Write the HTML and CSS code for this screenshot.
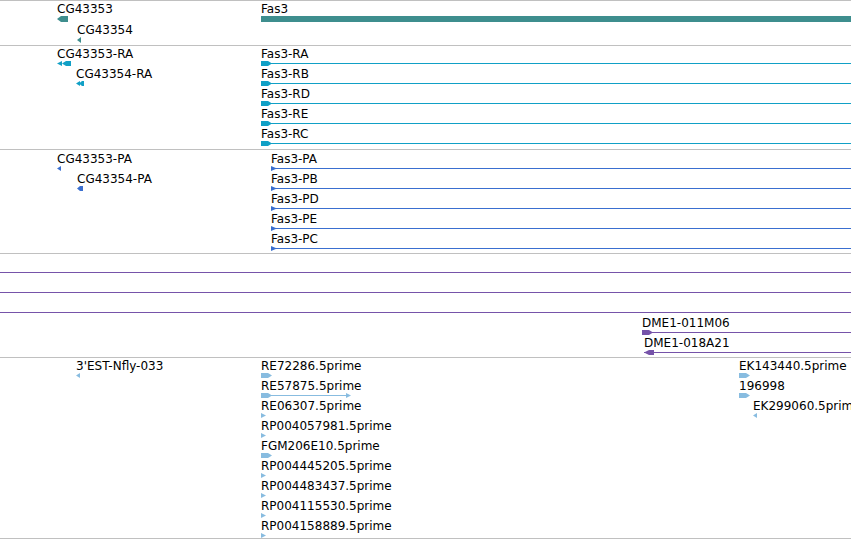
FILE: index.html
```html
<!DOCTYPE html>
<html lang="en">
<head>
  <meta charset="UTF-8">
  <title>Genome view</title>
  <link rel="stylesheet" href="styles.css">
</head>
<body>

  <div class="tracks">

    <!-- genes -->
    <div class="track gene t44">
      <div class="feat" style="left:57px;top:0;width:12px">
        <div class="lbl">CG43353</div>
        <svg class="glyph" width="12" height="6"><polygon points="0,3 4,0 11,0 11,6 4,6"/></svg>
      </div>
      <div class="feat" style="left:77px;top:21px;width:5px">
        <div class="lbl">CG43354</div>
        <svg class="glyph" width="5" height="6"><polygon points="0,3 4,0 4,6"/></svg>
      </div>
      <div class="feat" style="left:261px;top:0;width:590px">
        <div class="lbl">Fas3</div>
        <svg class="glyph" width="590" height="6"><rect x="0" y="0" width="590" height="6"/></svg>
      </div>
    </div>

    <!-- transcripts -->
    <div class="track mrna">
      <div class="feat" style="left:57px;top:0;width:15px">
        <div class="lbl">CG43353-RA</div>
        <svg class="glyph" width="15" height="5"><polygon points="0,2.5 5,0 5,5"/><polygon points="5,2.5 9,0 14,0 14,5 9,5"/></svg>
      </div>
      <div class="feat" style="left:76px;top:20px;width:9px">
        <div class="lbl">CG43354-RA</div>
        <svg class="glyph" width="9" height="5"><polygon points="0,2.5 4,0 4,5"/><polygon points="3,2.5 6,0 8,0 8,5 6,5"/></svg>
      </div>
      <div class="feat" style="left:261px;top:0;width:590px">
        <div class="lbl">Fas3-RA</div>
        <svg class="glyph" width="590" height="5"><rect x="0" y="2" width="590" height="1"/><polygon points="0,0 7,0 11,2.5 7,5 0,5"/></svg>
      </div>
      <div class="feat" style="left:261px;top:20px;width:590px">
        <div class="lbl">Fas3-RB</div>
        <svg class="glyph" width="590" height="5"><rect x="0" y="2" width="590" height="1"/><polygon points="0,0 7,0 11,2.5 7,5 0,5"/></svg>
      </div>
      <div class="feat" style="left:261px;top:40px;width:590px">
        <div class="lbl">Fas3-RD</div>
        <svg class="glyph" width="590" height="5"><rect x="0" y="2" width="590" height="1"/><polygon points="0,0 7,0 11,2.5 7,5 0,5"/></svg>
      </div>
      <div class="feat" style="left:261px;top:60px;width:590px">
        <div class="lbl">Fas3-RE</div>
        <svg class="glyph" width="590" height="5"><rect x="0" y="2" width="590" height="1"/><polygon points="0,0 7,0 11,2.5 7,5 0,5"/></svg>
      </div>
      <div class="feat" style="left:261px;top:80px;width:590px">
        <div class="lbl">Fas3-RC</div>
        <svg class="glyph" width="590" height="5"><rect x="0" y="2" width="590" height="1"/><polygon points="0,0 7,0 11,2.5 7,5 0,5"/></svg>
      </div>
    </div>

    <!-- coding sequences -->
    <div class="track cds">
      <div class="feat" style="left:57px;top:1px;width:5px">
        <div class="lbl">CG43353-PA</div>
        <svg class="glyph" width="5" height="5"><polygon points="0,2.5 4,0 4,5"/></svg>
      </div>
      <div class="feat" style="left:77px;top:21px;width:7px">
        <div class="lbl">CG43354-PA</div>
        <svg class="glyph" width="7" height="5"><polygon points="0,2.5 3,0 6,0 6,5 3,5"/></svg>
      </div>
      <div class="feat" style="left:271px;top:1px;width:580px">
        <div class="lbl">Fas3-PA</div>
        <svg class="glyph" width="580" height="5"><rect x="0" y="2" width="580" height="1"/><polygon points="0,0 6,2.5 0,5"/></svg>
      </div>
      <div class="feat" style="left:271px;top:21px;width:580px">
        <div class="lbl">Fas3-PB</div>
        <svg class="glyph" width="580" height="5"><rect x="0" y="2" width="580" height="1"/><polygon points="0,0 6,2.5 0,5"/></svg>
      </div>
      <div class="feat" style="left:271px;top:41px;width:580px">
        <div class="lbl">Fas3-PD</div>
        <svg class="glyph" width="580" height="5"><rect x="0" y="2" width="580" height="1"/><polygon points="0,0 6,2.5 0,5"/></svg>
      </div>
      <div class="feat" style="left:271px;top:61px;width:580px">
        <div class="lbl">Fas3-PE</div>
        <svg class="glyph" width="580" height="5"><rect x="0" y="2" width="580" height="1"/><polygon points="0,0 6,2.5 0,5"/></svg>
      </div>
      <div class="feat" style="left:271px;top:81px;width:580px">
        <div class="lbl">Fas3-PC</div>
        <svg class="glyph" width="580" height="5"><rect x="0" y="2" width="580" height="1"/><polygon points="0,0 6,2.5 0,5"/></svg>
      </div>
    </div>

    <!-- clones -->
    <div class="track clone">
      <div class="feat bare" style="left:0;top:1px;width:851px">
        <svg class="glyph" width="851" height="5"><rect x="0" y="2" width="851" height="1"/></svg>
      </div>
      <div class="feat bare" style="left:0;top:21px;width:851px">
        <svg class="glyph" width="851" height="5"><rect x="0" y="2" width="851" height="1"/></svg>
      </div>
      <div class="feat bare" style="left:0;top:41px;width:851px">
        <svg class="glyph" width="851" height="5"><rect x="0" y="2" width="851" height="1"/></svg>
      </div>
      <div class="feat" style="left:642px;top:61px;width:209px">
        <div class="lbl">DME1-011M06</div>
        <svg class="glyph" width="209" height="5"><rect x="0" y="2" width="209" height="1"/><polygon points="0,0 7,0 11,2.5 7,5 0,5"/></svg>
      </div>
      <div class="feat" style="left:644px;top:81px;width:207px">
        <div class="lbl">DME1-018A21</div>
        <svg class="glyph" width="207" height="5"><rect x="0" y="2" width="207" height="1"/><polygon points="0,2.5 5,0 10,0 10,5 5,5"/></svg>
      </div>
    </div>

    <!-- ESTs -->
    <div class="track est t180">
      <div class="feat" style="left:76px;top:0;width:4px">
        <div class="lbl">3'EST-Nfly-033</div>
        <svg class="glyph" width="4" height="5"><polygon points="0,2.5 4,0 4,5"/></svg>
      </div>
      <div class="feat" style="left:261px;top:0;width:12px">
        <div class="lbl">RE72286.5prime</div>
        <svg class="glyph" width="12" height="5"><polygon points="0,0 7,0 11,2.5 7,5 0,5"/></svg>
      </div>
      <div class="feat" style="left:261px;top:20px;width:91px">
        <div class="lbl">RE57875.5prime</div>
        <svg class="glyph" width="91" height="5"><rect x="0" y="2" width="88" height="1"/><polygon points="0,0 7,0 11,2.5 7,5 0,5"/><polygon points="85,0 90,2.5 85,5"/></svg>
      </div>
      <div class="feat" style="left:261px;top:40px;width:5px">
        <div class="lbl">RE06307.5prime</div>
        <svg class="glyph" width="5" height="5"><polygon points="0,0 5,2.5 0,5"/></svg>
      </div>
      <div class="feat" style="left:261px;top:60px;width:5px">
        <div class="lbl">RP004057981.5prime</div>
        <svg class="glyph" width="5" height="5"><polygon points="0,0 5,2.5 0,5"/></svg>
      </div>
      <div class="feat" style="left:261px;top:80px;width:12px">
        <div class="lbl">FGM206E10.5prime</div>
        <svg class="glyph" width="12" height="5"><polygon points="0,0 7,0 11,2.5 7,5 0,5"/></svg>
      </div>
      <div class="feat" style="left:261px;top:100px;width:5px">
        <div class="lbl">RP004445205.5prime</div>
        <svg class="glyph" width="5" height="5"><polygon points="0,0 5,2.5 0,5"/></svg>
      </div>
      <div class="feat" style="left:261px;top:120px;width:5px">
        <div class="lbl">RP004483437.5prime</div>
        <svg class="glyph" width="5" height="5"><polygon points="0,0 5,2.5 0,5"/></svg>
      </div>
      <div class="feat" style="left:261px;top:140px;width:5px">
        <div class="lbl">RP004115530.5prime</div>
        <svg class="glyph" width="5" height="5"><polygon points="0,0 5,2.5 0,5"/></svg>
      </div>
      <div class="feat" style="left:261px;top:160px;width:5px">
        <div class="lbl">RP004158889.5prime</div>
        <svg class="glyph" width="5" height="5"><polygon points="0,0 5,2.5 0,5"/></svg>
      </div>
      <div class="feat" style="left:739px;top:0;width:12px">
        <div class="lbl">EK143440.5prime</div>
        <svg class="glyph" width="12" height="5"><polygon points="0,0 7,0 11,2.5 7,5 0,5"/></svg>
      </div>
      <div class="feat" style="left:739px;top:20px;width:12px">
        <div class="lbl">196998</div>
        <svg class="glyph" width="12" height="5"><polygon points="0,0 7,0 11,2.5 7,5 0,5"/></svg>
      </div>
      <div class="feat" style="left:753px;top:40px;width:4px">
        <div class="lbl">EK299060.5prime</div>
        <svg class="glyph" width="4" height="5"><polygon points="0,2.5 4,0 4,5"/></svg>
      </div>
    </div>

  </div>

</body>
</html>
```

FILE: styles.css
```css
body {
  margin: 0;
  padding: 0;
  background: #fff;
  font-family: "DejaVu Sans", sans-serif;
  font-size: 12px;
  color: #000;
}
.tracks {
  width: 851px;
  border-top: 1px solid #c0c0c0;
  overflow: hidden;
}
.track {
  position: relative;
  height: 103px;
  border-bottom: 1px solid #c0c0c0;
  overflow: hidden;
}
.track.t44 {
  height: 44px;
}
.track.t180 {
  height: 180px;
}
.feat {
  position: absolute;
  padding-top: 2px;
}
.feat.bare {
  padding-top: 15px;
}
.lbl {
  height: 13px;
  line-height: 13px;
  white-space: nowrap;
  color: #000;
}
.glyph {
  display: block;
  overflow: visible;
  shape-rendering: crispEdges;
}
.glyph polygon {
  shape-rendering: geometricPrecision;
}
.glyph * {
  fill: currentColor;
}
.gene  { color: #3e8e8e; }
.mrna  { color: #11a0c6; }
.cds   { color: #3a6fd0; }
.clone { color: #7653a9; }
.est   { color: #88bce0; }
```
